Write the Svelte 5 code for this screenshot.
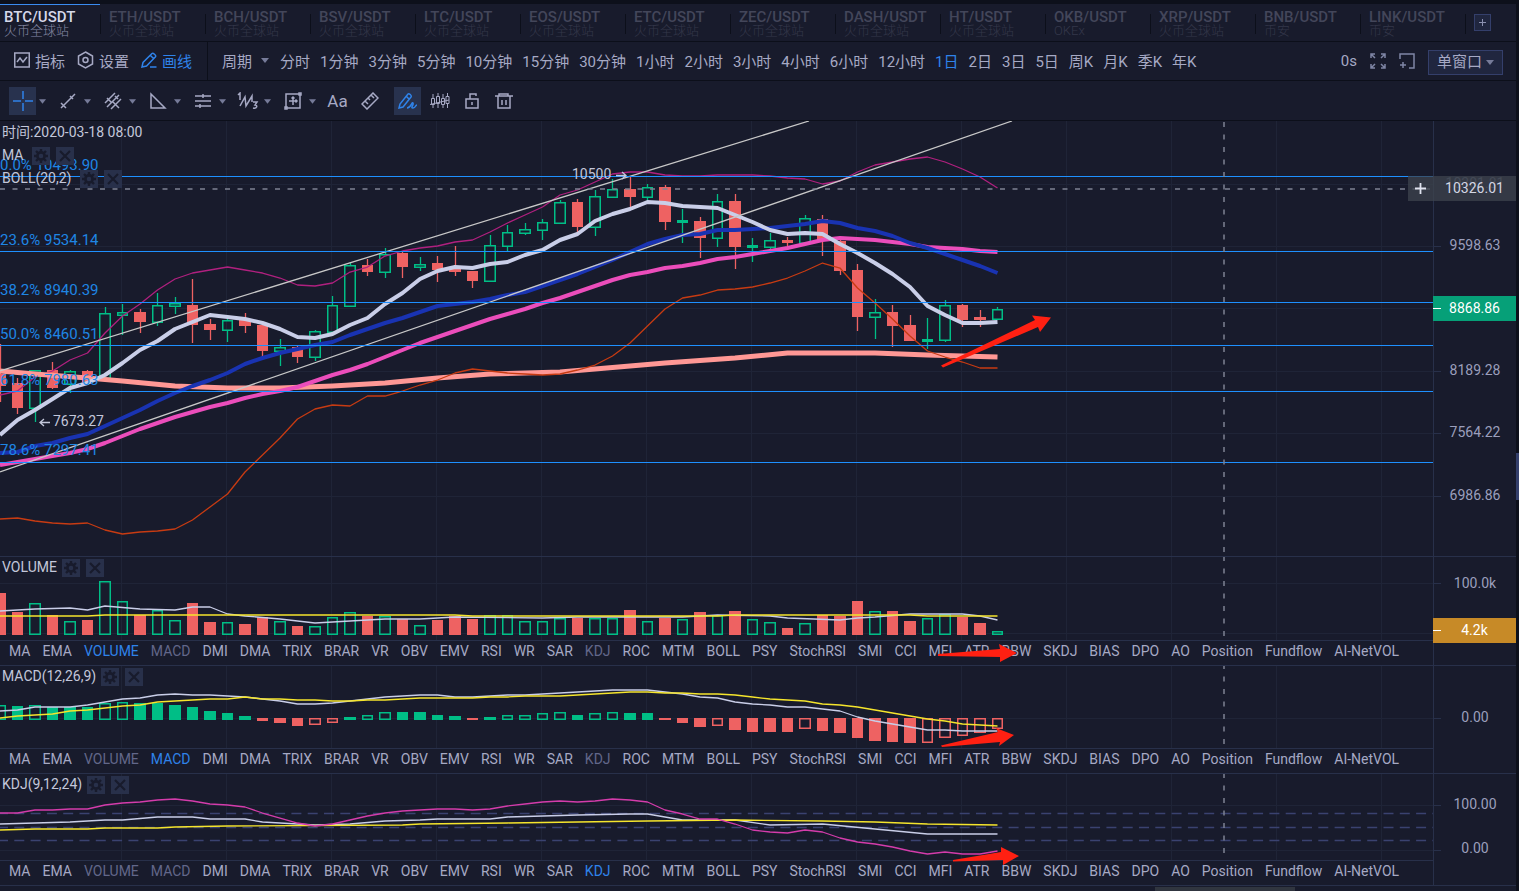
<script lang="ts">
  type Candle = [up: number, high: number, top: number, bottom: number, low: number];
  type Point = [index: number, y: number];

  const STEP = 17.5;

  const symbols = [
    ['BTC/USDT', '火币全球站'],
    ['ETH/USDT', '火币全球站'],
    ['BCH/USDT', '火币全球站'],
    ['BSV/USDT', '火币全球站'],
    ['LTC/USDT', '火币全球站'],
    ['EOS/USDT', '火币全球站'],
    ['ETC/USDT', '火币全球站'],
    ['ZEC/USDT', '火币全球站'],
    ['DASH/USDT', '火币全球站'],
    ['HT/USDT', '火币全球站'],
    ['OKB/USDT', 'OKEx'],
    ['XRP/USDT', '火币全球站'],
    ['BNB/USDT', '币安'],
    ['LINK/USDT', '币安'],
  ];

  const periods = [
    '分时', '1分钟', '3分钟', '5分钟', '10分钟', '15分钟', '30分钟',
    '1小时', '2小时', '3小时', '4小时', '6小时', '12小时',
    '1日', '2日', '3日', '5日', '周K', '月K', '季K', '年K',
  ];

  const indicators = [
    'MA', 'EMA', 'VOLUME', 'MACD', 'DMI', 'DMA', 'TRIX', 'BRAR', 'VR', 'OBV', 'EMV',
    'RSI', 'WR', 'SAR', 'KDJ', 'ROC', 'MTM', 'BOLL', 'PSY', 'StochRSI', 'SMI', 'CCI',
    'MFI', 'ATR', 'BBW', 'SKDJ', 'BIAS', 'DPO', 'AO', 'Position', 'Fundflow', 'AI-NetVOL',
  ];
  const opened = ['VOLUME', 'MACD', 'KDJ'];

  let symbol = $state('BTC/USDT');
  let period = $state('1日');
  let layout = $state('单窗口');

  // vertical grid, one line every six candles
  const gridX = Array.from({ length: 24 }, (_, i) => 121.5 + i * 105);

  const candles: Candle[] = [
    [0, 344, 374, 386, 402], [0, 378, 383, 408, 414], [1, 370, 370, 408, 422], [0, 362, 370, 388, 389],
    [1, 370, 371, 384, 393], [0, 370, 371, 382, 382], [1, 307, 313, 378, 378], [1, 304, 312, 315, 335],
    [0, 309, 312, 322, 333], [1, 293, 305, 322, 326], [1, 297, 303, 306, 314], [0, 279, 305, 325, 343],
    [0, 319, 324, 330, 340], [1, 318, 320, 330, 342], [0, 313, 320, 326, 333], [0, 325, 325, 351, 357],
    [1, 339, 347, 351, 366], [0, 346, 347, 357, 363], [1, 330, 331, 357, 361], [1, 296, 305, 332, 332],
    [1, 262, 265, 306, 306], [0, 259, 265, 272, 276], [1, 248, 254, 272, 278], [0, 251, 253, 267, 278],
    [1, 257, 264, 267, 271], [0, 256, 263, 270, 282], [0, 246, 268, 272, 276], [0, 271, 271, 281, 288],
    [1, 235, 245, 281, 281], [1, 225, 232, 246, 251], [1, 223, 229, 233, 235], [1, 219, 222, 230, 240],
    [1, 200, 202, 223, 223], [0, 199, 202, 227, 232], [1, 190, 196, 227, 236], [1, 179, 189, 197, 197],
    [0, 177, 189, 197, 207], [1, 184, 187, 197, 202], [0, 185, 187, 222, 230], [1, 209, 220, 222, 243],
    [0, 217, 221, 238, 258], [1, 194, 201, 238, 247], [0, 194, 201, 247, 269], [1, 238, 245, 247, 262],
    [1, 233, 240, 247, 249], [0, 237, 240, 243, 247], [1, 215, 218, 243, 243], [0, 215, 219, 241, 256],
    [0, 239, 241, 271, 275], [0, 264, 270, 317, 331], [1, 299, 312, 317, 339], [0, 305, 312, 326, 347],
    [0, 315, 325, 341, 341], [1, 318, 339, 341, 349], [1, 300, 305, 340, 342], [0, 304, 305, 320, 327],
    [0, 310, 317, 320, 327], [1, 307, 309, 319, 320],
  ];

  const maFast = [
    435, 420, 410, 399, 388, 383, 375, 363, 350, 341, 329, 322, 315, 317, 319, 323, 329, 337, 338, 334,
    325, 318, 304, 293, 279, 271, 267, 268, 264, 262, 255, 250, 240, 234, 221, 214, 209, 202, 203, 206,
    207, 208, 215, 222, 230, 234, 233, 234, 244, 253, 263, 274, 287, 306, 315, 323, 323, 322,
  ];
  const maMid = [
    453, 452, 446, 443, 438, 434, 426, 418, 410, 401, 393, 386, 380, 373, 364, 358, 353, 349, 345, 342,
    335, 329, 323, 318, 312, 306, 304, 302, 299, 295, 292, 286, 280, 274, 267, 260, 252, 244, 239, 235,
    234, 230, 230, 229, 228, 226, 224, 221, 223, 228, 231, 236, 243, 248, 254, 260, 266, 273,
  ];
  const maSlow = [
    465, 462, 459, 456, 453, 449, 443, 436, 429, 423, 417, 412, 407, 403, 398, 394, 391, 387, 381, 375,
    370, 364, 357, 350, 343, 337, 331, 325, 319, 314, 309, 303, 298, 292, 286, 280, 275, 272, 268, 266,
    263, 259, 257, 254, 251, 248, 244, 240, 238, 239, 240, 242, 244, 247, 248, 249, 251, 252,
  ];
  const bollUpper = [
    395, 391, 377, 371, 360, 353, 333, 316, 304, 290, 279, 273, 270, 267, 270, 273, 278, 285, 286, 283,
    272, 267, 256, 251, 248, 246, 242, 240, 232, 223, 215, 207, 195, 190, 182, 174, 172, 172, 175, 176,
    176, 175, 175, 175, 176, 178, 179, 184, 181, 172, 165, 162, 159, 157, 162, 169, 177, 188,
  ];
  const bollLower = [
    519, 518, 521, 523, 524, 523, 530, 534, 532, 531, 529, 520, 507, 494, 472, 455, 438, 419, 409, 405,
    406, 396, 396, 391, 385, 380, 373, 369, 371, 373, 374, 375, 374, 370, 365, 356, 343, 326, 309, 298,
    295, 290, 289, 287, 283, 278, 271, 263, 268, 288, 303, 319, 336, 351, 357, 362, 368, 368,
  ];
  const maLong: Point[] = [
    [0, 371], [2, 374], [5, 378], [7, 381], [10, 386], [13, 388], [16, 388], [19, 386], [22, 383],
    [25, 378], [28, 374], [32, 372], [36, 366], [38, 363], [42, 358], [45, 353], [50, 353], [53, 355], [57, 357],
  ];

  const fibs: [string, number, number][] = [
    ['0.0% 10493.90', 170, 176.5],
    ['23.6% 9534.14', 245, 251.5],
    ['38.2% 8940.39', 295, 302.5],
    ['50.0% 8460.51', 339, 345.5],
    ['61.8% 7980.63', 385, 391.5],
    ['78.6% 7297.41', 455, 462.5],
  ];

  const volumes = [
    593, 612, 603, 615, 621, 620, 581, 601, 615, 610, 620, 603, 622, 622, 624, 617, 621, 626, 626, 617,
    612, 616, 616, 619, 625, 620, 616, 619, 615, 615, 621, 621, 618, 618, 618, 618, 610, 621, 618, 619,
    612, 615, 611, 619, 622, 628, 623, 615, 616, 601, 611, 611, 621, 618, 614, 617, 623, 631,
  ];
  const volumeMa: Point[] = [
    [0, 611], [2, 609], [4, 608], [5, 610], [6, 606], [8, 609], [10, 610], [11, 607], [12, 607], [13, 614],
    [14, 616], [16, 619], [18, 623], [20, 621], [22, 619], [24, 619], [26, 617], [31, 618], [33, 617],
    [39, 617], [41, 615], [44, 616], [45, 618], [48, 620], [49, 618], [50, 617], [52, 614], [55, 614],
    [56, 616], [57, 620],
  ];
  const volumeMaSlow: Point[] = [
    [0, 616], [5, 616], [6, 615], [26, 615], [27, 616], [41, 616], [42, 615], [52, 615], [53, 616], [57, 616],
  ];

  // bar end relative to the zero line, hollow flag
  const histogram: [number, number][] = [
    [-14, 1], [-13, 0], [-14, 1], [-12, 0], [-12, 0], [-12, 0], [-16, 1], [-17, 1], [-16, 0], [-16, 0],
    [-14, 0], [-12, 0], [-8, 0], [-6, 0], [-3, 0], [3, 0], [5, 0], [8, 0], [7, 1], [5, 1],
    [-2, 0], [-4, 1], [-7, 1], [-7, 0], [-7, 0], [-4, 0], [-3, 0], [2, 0], [-2, 0], [-4, 1],
    [-4, 1], [-6, 1], [-7, 1], [-4, 0], [-6, 1], [-7, 1], [-6, 0], [-6, 0], [2, 0], [5, 0],
    [9, 0], [8, 1], [12, 0], [14, 0], [14, 0], [14, 0], [11, 1], [13, 0], [15, 0], [20, 0],
    [23, 0], [24, 0], [25, 0], [25, 1], [20, 1], [18, 1], [15, 1], [11, 1],
  ];
  const dif = [
    711, 710, 707, 707, 707, 705, 702, 699, 698, 695, 694, 695, 695, 696, 697, 699, 701, 704, 704, 703,
    701, 699, 697, 696, 695, 695, 697, 697, 696, 695, 695, 694, 693, 692, 691, 690, 690, 690, 692, 694,
    697, 698, 702, 704, 705, 707, 707, 709, 711, 717, 721, 724, 727, 730, 730, 731, 731, 731,
  ];
  const dea = [
    718, 716, 715, 714, 711, 710, 708, 706, 705, 702, 701, 700, 699, 699, 697, 699, 699, 700, 700, 701,
    701, 700, 700, 699, 698, 698, 698, 698, 697, 697, 696, 696, 696, 695, 694, 693, 692, 692, 693, 693,
    694, 694, 695, 697, 699, 700, 701, 704, 705, 707, 710, 713, 716, 719, 721, 724, 725, 726,
  ];

  const kdjJ = [
    813, 813, 810, 810, 809, 809, 805, 803, 802, 800, 799, 801, 804, 805, 807, 813, 818, 823, 826, 824,
    820, 816, 813, 811, 810, 809, 809, 810, 809, 806, 804, 802, 801, 802, 801, 799, 800, 802, 810, 814,
    819, 819, 824, 830, 832, 833, 830, 832, 838, 842, 844, 847, 851, 854, 852, 854, 854, 851,
  ];
  const kdjK: Point[] = [
    [0, 824], [2, 823], [4, 822], [6, 820], [7, 820], [9, 817], [11, 817], [12, 819], [14, 819], [15, 822],
    [18, 825], [20, 824], [22, 821], [24, 820], [25, 819], [28, 819], [29, 817], [33, 815], [36, 814],
    [37, 814], [39, 820], [42, 820], [44, 825], [47, 824], [50, 829], [53, 834], [57, 834],
  ];
  const kdjD: Point[] = [
    [0, 830], [2, 829], [5, 829], [6, 828], [9, 828], [10, 827], [13, 826], [23, 825], [24, 824], [29, 823],
    [37, 821], [42, 820], [47, 821], [50, 822], [53, 824], [57, 825],
  ];

  function line(ys: number[]): string {
    return ys.map((y, i) => `${i * STEP},${y}`).join(' ');
  }

  function sparse(points: Point[]): string {
    return points.map(([i, y]) => `${i * STEP},${y}`).join(' ');
  }

  function left(i: number): number {
    return Math.floor(i * STEP - 5.5);
  }
</script>

{#snippet caret()}
  <svg class="caret" width="8" height="5" viewBox="0 0 8 5" aria-hidden="true"><path d="M0 0h8L4 5z" fill="currentColor" /></svg>
{/snippet}

{#snippet legend(name: string)}
  <div class="legend-row">
    <span>{name}</span>
    <button class="mini" aria-label="{name} 设置">
      <svg width="14" height="14" viewBox="0 0 14 14">
        <circle cx="7" cy="7" r="3.6" fill="none" stroke="#181b2c" stroke-width="2.6" />
        <path d="M7 0v3M7 11v3M0 7h3M11 7h3M2 2l2.2 2.2M9.8 9.8L12 12M12 2L9.8 4.2M4.2 9.8L2 12" stroke="#181b2c" stroke-width="2.4" />
      </svg>
    </button>
    <button class="mini" aria-label="{name} 关闭">
      <svg width="14" height="14" viewBox="0 0 14 14"><path d="M2 2l10 10M12 2L2 12" stroke="#181b2c" stroke-width="2.2" /></svg>
    </button>
  </div>
{/snippet}

{#snippet grid(rows: number[])}
  {#each gridX as x}
    <line class="grid" x1={x} x2={x} y1="0" y2="900" />
  {/each}
  {#each rows as y}
    <line class="grid" x1="0" x2="100%" y1={y} y2={y} />
  {/each}
{/snippet}

{#snippet strip(active: string)}
  <nav class="indicators" aria-label="{active} 指标">
    {#each indicators as name}
      <button class:active={name === active} class:opened={opened.includes(name) && name !== active}>{name}</button>
    {/each}
  </nav>
{/snippet}

{#snippet bar(i: number, y: number, height: number, hollow: boolean, up: boolean)}
  {#if hollow}
    <rect
      class={up ? 'hollow up' : 'hollow down'}
      x={left(i) + 0.75}
      y={y + 0.75}
      width={i % 2 ? 9.5 : 10.5}
      height={Math.max(height - 1.5, 0.5)}
    />
  {:else}
    <rect class={up ? 'solid up' : 'solid down'} x={left(i)} {y} width={i % 2 ? 11 : 12} {height} />
  {/if}
{/snippet}

<div class="terminal">
  <header class="symbols">
    {#each symbols as [name, exchange]}
      <button class="symbol" class:active={symbol === name} onclick={() => (symbol = name)}>
        <strong>{name}</strong>
        <small>{exchange}</small>
      </button>
    {/each}
    <button class="add" aria-label="添加">
      <svg width="9" height="9" viewBox="0 0 9 9"><path d="M4.5 1v7M1 4.5h7" stroke="currentColor" /></svg>
    </button>
  </header>

  <div class="toolbar">
    <div class="menu">
      <button>
        <svg width="16" height="16" viewBox="0 0 16 16"><path d="M.75 1h14.5v14H.75zM3 10l3-4 3 4 4-5" /></svg>
        指标
      </button>
      <button>
        <svg width="17" height="18" viewBox="0 0 17 18"><path d="M8.500 1L15.500 5v8L8.500 17L1.500 13V5z" /><circle cx="8.500" cy="9" r="2.500" /></svg>
        设置
      </button>
      <button class="active">
        <svg width="16" height="16" viewBox="0 0 16 16"><path d="M1 15l1-4.500L11 1.500c1-1 4.500 2 3.500 3.200L5.500 14zM9.500 3.500l3 3M9 15h6.500" /></svg>
        画线
      </button>
    </div>
    <div class="periods">
      <button class="period-menu">周期 {@render caret()}</button>
      {#each periods as p}
        <button class:active={period === p} onclick={() => (period = p)}>{p}</button>
      {/each}
    </div>
    <div class="window-tools">
      <span>0s</span>
      <button aria-label="全屏">
        <svg width="16" height="16" viewBox="0 0 16 16"><path d="M1 5V1h4M1 1l4 4M11 1h4v4M15 1l-4 4M1 11v4h4M1 15l4-4M15 11v4h-4M15 15l-4-4" /></svg>
      </button>
      <button aria-label="新窗口">
        <svg width="16" height="16" viewBox="0 0 16 16"><path d="M1 6V1h14v14h-5M4 9v6M1 12h6" /></svg>
      </button>
      <label class="layout">
        <select bind:value={layout} aria-label="窗口布局">
          <option>单窗口</option>
          <option>双窗口</option>
        </select>
        {@render caret()}
      </label>
    </div>
  </div>

  <div class="drawbar">
    <button class="tool active" aria-label="十字光标">
      <svg width="20" height="20" viewBox="0 0 20 20"><path d="M10 0v8M10 12v8M0 10h8M12 10h8" /></svg>
    </button>
    {@render caret()}
    <button class="tool" aria-label="趋势线">
      <svg width="18" height="18" viewBox="0 0 18 18"><path d="M2 16L16 2M2 11l5 5M11 4l3 3" /></svg>
    </button>
    {@render caret()}
    <button class="tool" aria-label="平行线">
      <svg width="18" height="18" viewBox="0 0 18 18"><path d="M1 11L11 1M3 15L15 3M7 17L17 7M3 6l4 4M9 10l6 6M11 4l3 3" /></svg>
    </button>
    {@render caret()}
    <button class="tool" aria-label="三角形">
      <svg width="18" height="18" viewBox="0 0 18 18"><path d="M2 2v14h14z" /></svg>
    </button>
    {@render caret()}
    <button class="tool" aria-label="水平线">
      <svg width="18" height="18" viewBox="0 0 18 18"><path d="M1 4h16M1 9h16M1 14h16M9 2v4M6 12v4" /></svg>
    </button>
    {@render caret()}
    <button class="tool" aria-label="波浪">
      <svg width="22" height="18" viewBox="0 0 22 18"><path d="M1 3l2-2v7M3 14L8 5l1 9 6-10v6" /><path d="M16 10h4l-2 3c3 0 2 4-2 3" /></svg>
    </button>
    {@render caret()}
    <button class="tool" aria-label="测量">
      <svg width="18" height="18" viewBox="0 0 18 18"><path d="M2 2h14v14H2zM9 5v8M5 9h8M7.500 6.500L9 5l1.500 1.500M11.500 7.500L13 9l-1.500 1.500" /><path d="M15 1h2v2h-2zM1 15h2v2H1z" /></svg>
    </button>
    {@render caret()}
    <button class="tool text">Aa</button>
    <button class="tool" aria-label="尺子">
      <svg width="18" height="18" viewBox="0 0 18 18"><path d="M1 12L12 1l5 5L6 17zM4 9l3 3M7 6l2 2M10 3l3 3" /></svg>
    </button>
    <button class="tool active gap" aria-label="连续画线">
      <svg width="20" height="18" viewBox="0 0 20 18"><path d="M1 16l1-4L10 2c1-1 4 1.500 3 3L5 15zM8 4l3 3M9 16c4 0 5-7 6-5s-3 5 0 5 2-3 4-3" /></svg>
    </button>
    <button class="tool" aria-label="磁铁">
      <svg class="thin" width="20" height="18" viewBox="0 0 20 18"><path d="M1.500 6.500h3v6h-3zM6.500 4.500h3v7h-3zM11.500 6.500h3v6h-3zM16 4.500h3v7h-3zM3 2v4M3 12v4M8 1v3M8 12v4M13 2v4M13 12v4M17.500 1v3M17.500 12v4M0 12.500L19 8" /></svg>
    </button>
    <button class="tool" aria-label="锁定">
      <svg width="16" height="18" viewBox="0 0 16 18"><path d="M2 7h12v9H2zM6 7V2h6v2M8 10v3" /></svg>
    </button>
    <button class="tool" aria-label="删除">
      <svg width="18" height="18" viewBox="0 0 18 18"><path d="M0 4h18M4 4V2h9v2M3 4v12h12V4M7 8v5M11 8v5" /></svg>
    </button>
  </div>

  <section class="pane">
    <div class="plot main-plot">
      <svg width="100%" height="435" role="img" aria-label="K线图">
        <g transform="translate(0 -121)">
          {@render grid([184.5, 246.5, 308.5, 371.5, 433.5, 496.5])}
          {#each candles as [up, high, top, bottom, low], i}
            {@const cx = Math.floor(i * STEP)}
            <path class={up ? 'wick up' : 'wick down'} d="M{cx + 0.5} {high}V{top}M{cx + 0.5} {bottom}V{low}" />
            {@render bar(i, top, bottom - top + (up ? 1 : 0), !!up, !!up)}
          {/each}
          <polyline class="curve" points={line(bollUpper)} stroke="#b0207f" stroke-width="1.3" />
          <polyline class="curve" points={sparse(maLong)} stroke="#ff9895" stroke-width="5" />
          <polyline class="curve" points={line(maSlow)} stroke="#eb4dbb" stroke-width="4" />
          <polyline class="curve" points={line(maMid)} stroke="#1933b2" stroke-width="4" />
          <polyline class="curve" points={line(maFast)} stroke="#c9cee8" stroke-width="4" />
          <polyline class="curve" points={line(bollLower)} stroke="#c73b12" stroke-width="1.3" />
          <path d="M0 371L809 121M0 472L1012 121" stroke="#c8c8c8" stroke-width="1.3" />
          {#each fibs as [text, labelY, y]}
            <line x1="0" x2="100%" y1={y} y2={y} stroke="#1e90ff" />
            <text class="fib" x="0" y={labelY}>{text}</text>
          {/each}
          <line class="cross" x1="0" x2="100%" y1="189" y2="189" />
          <line class="cross" x1="1224" x2="1224" y1="122" y2="556" />
          <text class="mark" x="572" y="179">10500</text>
          <path class="pointer" d="M616 175.500h10M622 172l4 3.500-4 3.500" />
          <text class="mark" x="53" y="426">7673.27</text>
          <path class="pointer" d="M50 422.500H40M44 419l-4 3.500 4 3.500" />
        </g>
      </svg>
      <div class="legend">
        <div class="time">时间:2020-03-18 08:00</div>
        {@render legend('MA')}
        {@render legend('BOLL(20,2)')}
      </div>
    </div>
    <svg class="axis" width="100%" height="435">
      <g transform="translate(0 -121)">
        <path class="tick" d="M0 246.500h7M0 371.500h7M0 433.500h7M0 496.500h7" />
        <text x="50%" y="188" opacity="0.5">10301.81</text>
        <text x="50%" y="250">9598.63</text>
        <text x="50%" y="375">8189.28</text>
        <text x="50%" y="437">7564.22</text>
        <text x="50%" y="500">6986.86</text>
      </g>
    </svg>
    <div class="tag cursor-tag"><button aria-label="添加提醒">
      <svg width="11" height="11" viewBox="0 0 11 11"><path d="M5.500 0v11M0 5.500h11" stroke="#dfe2ee" stroke-width="1.8" /></svg>
    </button><span>10326.01</span></div>
    <div class="tag price-tag"><span>8868.86</span></div>
  </section>

  <section class="pane">
    <div class="plot">
      <svg width="100%" height="83" role="img" aria-label="VOLUME">
        <g transform="translate(0 -557)">
          {@render grid([583.5, 633.5])}
          {#each volumes as y, i}
            {@render bar(i, y, 635 - y, !!candles[i][0], !!candles[i][0])}
          {/each}
          <polyline class="curve" points={sparse(volumeMa)} stroke="#c9cee8" stroke-width="1.3" />
          <polyline class="curve" points={sparse(volumeMaSlow)} stroke="#f5e52c" stroke-width="1.3" />
          <line class="cross" x1="1224" x2="1224" y1="556" y2="636" />
        </g>
      </svg>
      <div class="legend compact">{@render legend('VOLUME')}</div>
      {@render strip('VOLUME')}
    </div>
    <svg class="axis" width="100%" height="83">
      <g transform="translate(0 -557)">
        <path class="tick" d="M0 583.500h7" />
        <text x="50%" y="588">100.0k</text>
      </g>
    </svg>
    <div class="tag volume-tag"><span>4.2k</span></div>
  </section>

  <section class="pane">
    <div class="plot">
      <svg width="100%" height="82" role="img" aria-label="MACD">
        <g transform="translate(0 -666)">
          {@render grid([718.5])}
          {#each histogram as [v, hollow], i}
            {@render bar(i, v < 0 ? 719 + v : 718, v < 0 ? 1 - v : v, !!hollow, v < 0)}
          {/each}
          <polyline class="curve" points={line(dif)} stroke="#c9cee8" stroke-width="1.3" />
          <polyline class="curve" points={line(dea)} stroke="#f5e52c" stroke-width="1.3" />
          <line class="cross" x1="1224" x2="1224" y1="664" y2="745" />
        </g>
      </svg>
      <div class="legend compact">{@render legend('MACD(12,26,9)')}</div>
      {@render strip('MACD')}
    </div>
    <svg class="axis" width="100%" height="82">
      <g transform="translate(0 -666)">
        <path class="tick" d="M0 718.500h7" />
        <text x="50%" y="722">0.00</text>
      </g>
    </svg>
  </section>

  <section class="pane">
    <div class="plot">
      <svg width="100%" height="86" role="img" aria-label="KDJ">
        <g transform="translate(0 -774)">
          {@render grid([805.5, 850.5])}
          <path d="M0 813.500H2600M0 827.500H2600M0 840.500H2600" stroke="#3a4270" stroke-width="1.3" stroke-dasharray="10 6.3" stroke-dashoffset="2" />
          <polyline class="curve" points={sparse(kdjK)} stroke="#c9cee8" stroke-width="1.3" />
          <polyline class="curve" points={sparse(kdjD)} stroke="#f5e52c" stroke-width="1.3" />
          <polyline class="curve" points={line(kdjJ)} stroke="#d43cab" stroke-width="1.3" />
          <line class="cross" x1="1224" x2="1224" y1="773" y2="854" />
        </g>
      </svg>
      <div class="legend compact">{@render legend('KDJ(9,12,24)')}</div>
      {@render strip('KDJ')}
    </div>
    <svg class="axis" width="100%" height="86">
      <g transform="translate(0 -774)">
        <path class="tick" d="M0 805.500h7M0 850.500h7" />
        <text x="50%" y="809">100.00</text>
        <text x="50%" y="853">0.00</text>
      </g>
    </svg>
  </section>

  <div class="scroll"><div class="thumb"></div></div>

  <svg class="drawings" aria-hidden="true">
    <path d="M941 365.500L1035 320L1032 315.500L1051 317.500L1040 332L1038 327L943 367.500z" />
    <path d="M938 654L1000 649L999 644L1017 653L1000 662L1000 657L938 656z" />
    <path d="M941 745.500L998 732L996 728L1014 735L999 746L1000 742L942 747z" />
    <path d="M953 860L1001 852L1001 847L1019 856L1003 865L1003 860L953 861.500z" />
  </svg>
  <button class="handle" aria-label="展开侧栏"></button>
</div>

<style>
  :global(body) {
    background: #0d101b;
  }

  .terminal {
    position: relative;
    display: flex;
    flex-direction: column;
    min-height: 100vh;
    box-sizing: border-box;
    padding: 4px 3px 0 0;
    overflow: hidden;
    background: #0d101b;
    color: #a6a9c4;
    font: 14px Roboto, 'Noto Sans CJK SC', sans-serif;
  }

  button {
    padding: 0;
    border: 0;
    background: none;
    color: inherit;
    font: inherit;
    white-space: nowrap;
    cursor: pointer;
  }

  svg {
    display: block;
    flex: none;
  }

  .symbols,
  .toolbar,
  .drawbar {
    display: flex;
    align-items: center;
    background: #181b2c;
    border-bottom: 1px solid #0c0f1a;
  }

  .symbols {
    height: 37px;
  }

  .symbol {
    position: relative;
    display: flex;
    flex-direction: column;
    justify-content: center;
    align-self: stretch;
    width: 100px;
    margin-right: 5px;
    padding: 2px 0 0 4px;
    border-top: 1px solid transparent;
    box-sizing: border-box;
    text-align: left;
    color: #43465a;
  }

  .symbol::after {
    content: '';
    position: absolute;
    top: 9px;
    right: -1px;
    width: 1px;
    height: 20px;
    background: #0c0f1a;
  }

  .symbol strong {
    font-size: 15px;
    font-weight: 500;
    line-height: 14px;
  }

  .symbol small {
    font-size: 13px;
    font-weight: 300;
    line-height: 14px;
    color: #34374a;
  }

  .symbol.active {
    border-top-color: #3a8bf0;
    color: #d5d8ea;
  }

  .symbol.active small {
    color: #868aa6;
  }

  .add {
    display: grid;
    place-items: center;
    width: 17px;
    height: 17px;
    margin-left: 4px;
    border: 1px solid #343f6b;
    box-sizing: border-box;
    background: #20263f;
    color: #8b90b0;
  }

  .toolbar {
    height: 38px;
    font-size: 15px;
  }

  .menu {
    display: flex;
    align-items: center;
    align-self: stretch;
    gap: 12px;
    padding: 0 15px 2px 14px;
    border-right: 1px solid #0c0f1a;
  }

  .menu button {
    display: flex;
    align-items: center;
    gap: 5px;
  }

  .toolbar svg:not(.caret),
  .tool svg {
    fill: none;
    stroke: currentColor;
    stroke-width: 1.5;
  }

  .tool svg.thin {
    stroke-width: 1;
  }

  .periods {
    display: flex;
    align-items: center;
    gap: 10px;
    padding: 0 0 2px 14px;
  }

  .period-menu {
    display: flex;
    align-items: center;
    gap: 9px;
    padding-right: 1px;
  }

  .active {
    color: #2f83ea;
  }

  .window-tools {
    display: flex;
    align-items: center;
    gap: 13px;
    margin-left: auto;
    padding-right: 13px;
  }

  .window-tools button {
    color: #7f86a5;
  }

  .layout {
    position: relative;
    display: flex;
    align-items: center;
    margin-top: 2px;
  }

  .layout select {
    appearance: none;
    width: 75px;
    height: 25px;
    padding: 0 0 0 8px;
    border: 1px solid #343f6b;
    border-radius: 0;
    background: #20263f;
    color: inherit;
    font: inherit;
  }

  .layout .caret {
    position: absolute;
    right: 9px;
    pointer-events: none;
  }

  .caret {
    color: #767b99;
  }

  .drawbar {
    height: 39px;
    padding-left: 9px;
  }

  .drawbar .caret {
    width: 7px;
    margin: 2px 8px 0 3px;
  }

  .tool {
    display: grid;
    place-items: center;
    flex: none;
    width: 27px;
    height: 28px;
  }

  .tool + .tool {
    margin-left: 5px;
  }

  .tool + .tool.gap {
    margin-left: 11px;
  }

  .tool.text {
    font-size: 17px;
  }

  .tool.active {
    background: #28324e;
  }

  .pane {
    position: relative;
    display: grid;
    grid-template-columns: minmax(0, 1fr) 82px;
    background: #181b2c;
    border-bottom: 1px solid #28304a;
  }

  .plot {
    position: relative;
    min-width: 0;
    border-right: 1px solid #28304a;
  }

  .axis text {
    fill: #9b9fbc;
    text-anchor: middle;
  }

  .tick {
    stroke: #28304a;
  }

  .grid {
    stroke: #1f2437;
  }

  .up {
    stroke: #00be86;
    fill: #00be86;
  }

  .down {
    stroke: #ee6262;
    fill: #ee6262;
  }

  .solid {
    stroke: none;
  }

  .hollow {
    fill: none;
    stroke-width: 1.5;
  }

  .wick {
    stroke-width: 1.3;
  }

  .curve {
    fill: none;
    stroke-linejoin: round;
  }

  .cross {
    stroke: #7d8292;
    stroke-width: 1.5;
    stroke-dasharray: 5 7.5;
  }

  .fib {
    fill: #1f86e4;
    font-size: 15px;
  }

  .mark {
    fill: #c3c7da;
  }

  .pointer {
    fill: none;
    stroke: #c3c7da;
    stroke-width: 1.3;
  }

  .legend {
    position: absolute;
    top: 0;
    left: 2px;
    color: #c3c7da;
  }

  .time,
  .legend-row {
    height: 23px;
    line-height: 23px;
  }

  .legend-row {
    display: flex;
    align-items: center;
    gap: 6px;
    line-height: 18px;
  }

  .legend-row > span {
    padding-bottom: 2px;
    margin-right: -1px;
  }

  .main-plot .legend-row > span {
    margin-right: 3px;
  }

  .compact .legend-row {
    height: 22px;
  }

  .mini {
    display: grid;
    place-items: center;
    width: 18px;
    height: 18px;
    background: #28304a;
  }

  .indicators {
    display: flex;
    align-items: center;
    gap: 12px;
    height: 24px;
    padding-left: 9px;
    border-top: 1px solid #28304a;
    overflow: hidden;
  }

  .indicators button {
    padding-bottom: 4px;
    line-height: 20px;
  }

  .indicators .opened {
    color: #62678a;
  }

  .tag {
    position: absolute;
    right: 0;
    display: flex;
    align-items: center;
    width: 83px;
    height: 25px;
    color: #fff;
  }

  .tag span {
    flex: 1;
    padding-bottom: 2px;
    text-align: center;
  }

  .tag::before {
    content: '';
    position: absolute;
    top: 12px;
    left: 0;
    width: 8px;
    height: 1px;
    background: currentColor;
  }

  .cursor-tag {
    top: 55px;
    width: 108px;
    background: rgba(62, 68, 78, 0.75);
    color: #d3d6e4;
  }

  .cursor-tag::before {
    display: none;
  }

  .cursor-tag button {
    display: grid;
    place-items: center;
    width: 25px;
    height: 25px;
  }

  .price-tag {
    top: 175px;
    background: #06a078;
  }

  .volume-tag {
    top: 61px;
    z-index: 1;
    background: #c78a27;
  }

  .scroll {
    flex: 1;
    padding: 1px 221px 0 0;
    background: #181b2c;
  }

  .thumb {
    width: 140px;
    height: 4px;
    margin-left: auto;
    background: #30353f;
  }

  .drawings {
    position: absolute;
    top: 0;
    left: 0;
    width: 100%;
    height: 100%;
    fill: #ff2012;
    pointer-events: none;
  }

  .handle {
    position: absolute;
    top: 453px;
    right: 0;
    width: 3px;
    height: 47px;
    background: #343f6b;
  }
</style>
